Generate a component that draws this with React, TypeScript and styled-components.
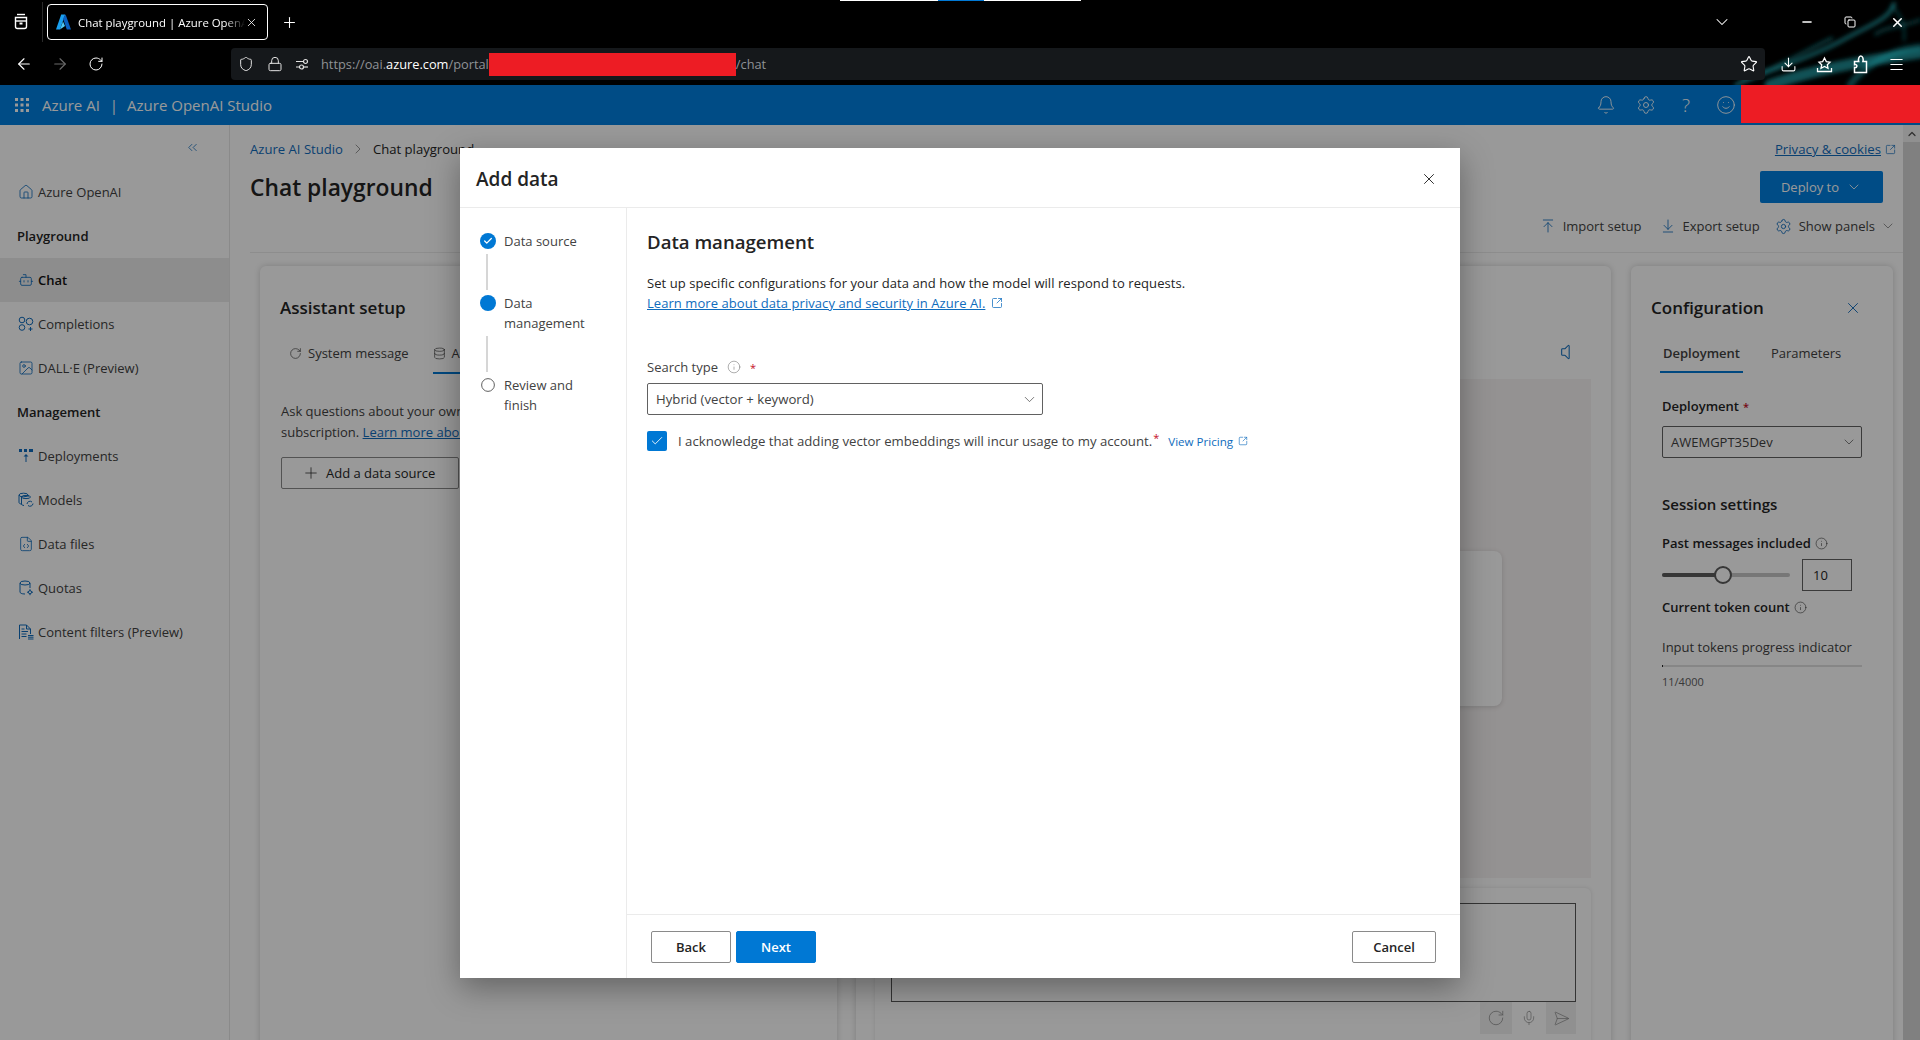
import React from 'react';
import styled, { createGlobalStyle } from 'styled-components';
import {
  ArrowDownToLine,
  ArrowLeft,
  ArrowRight,
  ArrowUpToLine,
  Bell,
  Bot,
  Check,
  ChevronDown,
  ChevronRight,
  ChevronsLeft,
  Copy,
  Database,
  Download,
  FileCode,
  House,
  Image,
  Info,
  Lock,
  Menu,
  Mic,
  Minus,
  Plus,
  RotateCw,
  SendHorizontal,
  Settings,
  Shield,
  Smile,
  SquareArrowOutUpRight,
  Star,
  Volume,
  X,
} from 'lucide-react';

const FONT = '"Open Sans", "Noto Sans", "Liberation Sans", sans-serif';
const BLUE = '#0078d4';
const LINK = '#0f6cbd';
const ICON_BLUE = '#0f6cbd';

const GlobalStyle = createGlobalStyle`
  html, body {
    margin: 0;
    padding: 0;
    height: 100%;
    overflow: hidden;
    background: #fff;
  }
  * {
    box-sizing: border-box;
  }
  body {
    font-family: ${FONT};
    font-size: 13px;
    color: #242424;
  }
`;

const Page = styled.div`
  position: relative;
  display: flex;
  flex-direction: column;
  width: 1920px;
  height: 1040px;
  overflow: hidden;
`;

/* browser chrome */
const Chrome = styled.div`
  position: relative;
  flex: 0 0 85px;
  background: #000;
  color: #fff;
`;

const ScreenShareBar = styled.div`
  position: absolute;
  top: 0;
  left: 840px;
  display: flex;
  width: 241px;
  height: 1px;
  background: #fff;
`;

const ScreenShareBlue = styled.div`
  width: 46px;
  margin-left: 98px;
  background: #0078d4;
`;

const Smoke = styled.svg`
  position: absolute;
  right: 0;
  top: 0;
`;

const TabRow = styled.div`
  position: relative;
  display: flex;
  align-items: center;
  height: 44px;
`;

const TabsButton = styled.div`
  display: flex;
  align-items: center;
  justify-content: center;
  width: 43px;
  height: 40px;
  border-right: 1px solid #2a2a2a;
`;

const Tab = styled.div`
  display: flex;
  align-items: center;
  width: 221px;
  height: 36px;
  margin-left: 4px;
  padding: 0 9px 0 8px;
  border: 1px solid #fff;
  border-radius: 4px;
  font-size: 11.4px;
`;

const TabTitle = styled.span`
  flex: 1;
  margin-left: 7px;
  overflow: hidden;
  white-space: nowrap;
  -webkit-mask-image: linear-gradient(90deg, #000 88%, transparent);
  mask-image: linear-gradient(90deg, #000 88%, transparent);
`;

const NewTab = styled.div`
  display: flex;
  margin-left: 13px;
`;

const WindowControls = styled.div`
  display: flex;
  align-items: center;
  margin-left: auto;
  padding-right: 15px;
`;

const WindowControl = styled.div<{ $gap: number }>`
  display: flex;
  margin-left: ${(p) => p.$gap}px;
`;

const UrlRow = styled.div`
  position: relative;
  display: flex;
  align-items: center;
  height: 32px;
  margin-top: 4px;
  padding: 0 6px;
`;

const NavButton = styled.div<{ $dim?: boolean }>`
  display: flex;
  align-items: center;
  justify-content: center;
  width: 36px;
  color: ${(p) => (p.$dim ? '#6b6b6b' : '#fff')};
`;

const AddressBar = styled.div`
  display: flex;
  flex: 1;
  align-items: center;
  height: 32px;
  margin: 0 5px 0 117px;
  padding: 0 7px 0 7px;
  border-radius: 4px;
  background: #15181b;
  font-size: 12.8px;
  color: #8f9296;
`;

const AddressIcon = styled.span<{ $gap: number }>`
  display: flex;
  margin-right: ${(p) => p.$gap}px;
  color: #e2e2e2;
`;

const UrlStrong = styled.span`
  color: #fff;
`;

const Redaction = styled.span`
  display: inline-block;
  width: 247px;
  height: 23px;
  background: #ed1c24;
`;

const AddressEnd = styled.span`
  display: flex;
  margin-left: auto;
  color: #fff;
`;

const ToolbarButton = styled.div`
  display: flex;
  align-items: center;
  justify-content: center;
  width: 36px;
`;

/* studio header */
const StudioBar = styled.div`
  display: flex;
  flex: 0 0 40px;
  align-items: center;
  padding-left: 14px;
  background: #007fe0;
  color: #fff;
`;

const Waffle = styled.svg`
  margin-right: 12px;
`;

const StudioTitle = styled.span`
  font-size: 15px;
  white-space: nowrap;
`;

const StudioDivider = styled.span`
  margin: 0 9px 0 10px;
  font-size: 15px;
`;

const StudioIcons = styled.div`
  display: flex;
  align-items: center;
  gap: 20px;
  margin-left: auto;
  padding-right: 184px;
`;

const HelpGlyph = styled.span`
  display: block;
  width: 20px;
  font-size: 19px;
  line-height: 20px;
  font-weight: 300;
  text-align: center;
`;

const RedBlock = styled.div`
  position: absolute;
  top: 85px;
  right: 0;
  z-index: 3;
  width: 179px;
  height: 38px;
  background: #ed1c24;
`;

/* page body */
const Body = styled.div`
  display: flex;
  flex: 1;
  min-height: 0;
`;

const Sidebar = styled.nav`
  flex: 0 0 230px;
  border-right: 1px solid #e6e6e6;
`;

const Collapse = styled.div`
  display: flex;
  justify-content: flex-end;
  height: 45px;
  padding: 15px 29px 0 0;
  color: ${ICON_BLUE};
`;

const NavSection = styled.div`
  display: flex;
  align-items: center;
  height: 44px;
  padding-left: 17px;
  font-weight: 600;
  font-size: 13px;
`;

const NavItem = styled.div<{ $active?: boolean }>`
  display: flex;
  align-items: center;
  height: 44px;
  padding-left: 18px;
  font-size: 13px;
  color: ${(p) => (p.$active ? '#111' : '#424242')};
  font-weight: ${(p) => (p.$active ? 600 : 400)};
  background: ${(p) => (p.$active ? '#ebebeb' : 'transparent')};
`;

const NavGlyph = styled.span`
  display: flex;
  align-items: center;
  justify-content: center;
  width: 16px;
  margin-right: 4px;
  color: ${ICON_BLUE};
`;

const Main = styled.main`
  flex: 1;
  min-width: 0;
`;

const Head = styled.header`
  display: flex;
  justify-content: space-between;
  height: 128px;
  margin-left: 20px;
  padding-top: 14px;
  border-bottom: 1px solid #ececec;
`;

const Crumbs = styled.div`
  display: flex;
  align-items: center;
  height: 20px;
  font-size: 13.1px;
`;

const CrumbLink = styled.span`
  color: ${LINK};
`;

const CrumbSep = styled.span`
  display: flex;
  margin: 0 7px;
  color: #616161;
`;

const PageTitle = styled.h1`
  margin: 14px 0 0;
  font-size: 22.8px;
  line-height: 30px;
  font-weight: 600;
`;

const HeadRight = styled.div`
  display: flex;
  flex-direction: column;
  align-items: flex-end;
  padding-right: 7px;
`;

const PrivacyLink = styled.a`
  display: flex;
  align-items: center;
  gap: 4px;
  height: 20px;
  font-size: 13.2px;
  color: ${LINK};
  text-decoration: underline;
`;

const DeployButton = styled.div`
  display: flex;
  align-items: center;
  justify-content: center;
  gap: 7px;
  width: 123px;
  height: 32px;
  margin: 12px 13px 0 0;
  border-radius: 2px;
  background: #007fe0;
  color: #fff;
  font-size: 13px;
`;

const HeadTools = styled.div`
  display: flex;
  align-items: center;
  height: 22px;
  margin-top: 12px;
  font-size: 13px;
  color: #424242;
`;

const HeadTool = styled.span<{ $gap: number }>`
  display: flex;
  align-items: center;
  gap: 7px;
  margin-left: ${(p) => p.$gap}px;
  color: #424242;
  svg {
    color: ${ICON_BLUE};
  }
`;

const ToolChevron = styled.span`
  display: flex;
  margin-left: 5px;
  color: #616161;
`;

const Cards = styled.div`
  display: flex;
  gap: 19px;
  height: 800px;
  margin: 13px 0 0 30px;
`;

const Card = styled.section<{ $width: number }>`
  flex: 0 0 ${(p) => p.$width}px;
  border-radius: 6px;
  background: #fff;
  box-shadow: 0 0 6px rgba(0, 0, 0, 0.18);
`;

const SetupCard = styled(Card)`
  padding: 29px 20px;
`;

const CardTitle = styled.h2`
  margin: 0;
  font-size: 17px;
  line-height: 26px;
  font-weight: 600;
`;

const SetupTabs = styled.div`
  display: flex;
  align-items: flex-start;
  height: 34px;
  margin-top: 19px;
  padding-left: 9px;
  font-size: 13px;
  color: #424242;
`;

const SetupTab = styled.span<{ $active?: boolean }>`
  display: flex;
  align-items: center;
  gap: 6px;
  height: 34px;
  margin-right: 24px;
  padding-bottom: 6px;
  border-bottom: ${(p) => (p.$active ? `2px solid ${BLUE}` : '2px solid transparent')};
`;

const SetupParagraph = styled.p`
  margin: 27px 0 0 1px;
  font-size: 13px;
  line-height: 21px;
  white-space: nowrap;
  color: #424242;
`;

const UnderLink = styled.span`
  color: ${LINK};
  text-decoration: underline;
`;

const OutlineButton = styled.div`
  display: flex;
  align-items: center;
  gap: 6px;
  width: 178px;
  height: 32px;
  margin: 14px 0 0 1px;
  padding-left: 20px;
  border: 1px solid #8a8a8a;
  border-radius: 2px;
  font-size: 13px;
`;

const ChatCard = styled(Card)`
  padding: 0 20px 0 19px;
`;

const SpeakerRow = styled.div`
  display: flex;
  align-items: center;
  justify-content: flex-end;
  height: 113px;
  padding: 58px 11px 0 0;
  color: ${ICON_BLUE};
`;

const ChatPane = styled.div`
  display: flex;
  align-items: center;
  justify-content: center;
  height: 499px;
  background: #f7f3f3;
`;

const ChatNotice = styled.div`
  width: 538px;
  height: 155px;
  border-radius: 8px;
  background: #fff;
  box-shadow: 0 1px 5px rgba(0, 0, 0, 0.15);
`;

const InputCard = styled.div`
  height: 160px;
  margin-top: 10px;
  padding: 15px 15px 0 16px;
  border-radius: 6px;
  box-shadow: 0 0 4px rgba(0, 0, 0, 0.12);
`;

const TextBox = styled.div`
  height: 99px;
  border: 1px solid #575757;
`;

const InputTools = styled.div`
  display: flex;
  justify-content: flex-end;
  gap: 2px;
  color: #8a8a8a;
`;

const InputTool = styled.span<{ $patch?: boolean; $width: number }>`
  display: flex;
  align-items: center;
  justify-content: center;
  width: ${(p) => p.$width}px;
  height: 32px;
  background: ${(p) => (p.$patch ? '#f0f0f0' : 'transparent')};
`;

const ConfigCard = styled(Card)`
  margin-left: 1px;
  padding: 29px 20px;
`;

const ConfigHead = styled.div`
  display: flex;
  align-items: center;
  justify-content: space-between;
  padding-right: 11px;
`;

const ConfigClose = styled.span`
  display: flex;
  color: ${ICON_BLUE};
`;

const ConfigTabs = styled.div`
  display: flex;
  gap: 25px;
  height: 32px;
  margin: 20px 0 0 9px;
  font-size: 13px;
  color: #424242;
`;

const ConfigTab = styled.span<{ $active?: boolean }>`
  height: 32px;
  padding: 0 3px;
  line-height: 24px;
  font-weight: ${(p) => (p.$active ? 600 : 400)};
  border-bottom: ${(p) => (p.$active ? `2px solid ${BLUE}` : '2px solid transparent')};
`;

const ConfigBody = styled.div`
  padding-left: 11px;
`;

const ConfigLabel = styled.div<{ $top: number }>`
  display: flex;
  align-items: center;
  gap: 4px;
  height: 20px;
  margin-top: ${(p) => p.$top}px;
  font-size: 13px;
  font-weight: 600;
  white-space: nowrap;
`;

const Required = styled.span`
  color: #c50f1f;
  font-size: 11px;
`;

const ConfigSelect = styled.div`
  display: flex;
  align-items: center;
  justify-content: space-between;
  width: 200px;
  height: 32px;
  margin-top: 10px;
  padding: 0 4px 0 8px;
  border: 1px solid #616161;
  border-radius: 2px;
  font-size: 13px;
  color: #424242;
`;

const SessionTitle = styled.div`
  height: 24px;
  margin-top: 34px;
  font-size: 15px;
  line-height: 24px;
  font-weight: 600;
`;

const SliderRow = styled.div`
  display: flex;
  align-items: center;
  margin-top: 6px;
`;

const SliderTrack = styled.div`
  position: relative;
  width: 128px;
  height: 4px;
  border-radius: 2px;
  background: #c7c7c7;
`;

const SliderFill = styled.div`
  height: 4px;
  border-radius: 2px;
  background: #5c5c5c;
`;

const SliderThumb = styled.div`
  position: absolute;
  top: -7px;
  width: 18px;
  height: 18px;
  border: 2px solid #5c5c5c;
  border-radius: 50%;
  background: #fff;
`;

const NumberBox = styled.div`
  width: 50px;
  height: 32px;
  margin-left: 12px;
  padding-left: 10px;
  border: 1px solid #616161;
  font-size: 13px;
  line-height: 30px;
`;

const ProgressLabel = styled.div`
  margin-top: 20px;
  font-size: 13px;
  line-height: 20px;
  color: #424242;
  white-space: nowrap;
`;

const ProgressTrack = styled.div`
  width: 200px;
  height: 2px;
  margin-top: 8px;
  background: #e0e0e0;
`;

const ProgressFill = styled.div`
  height: 2px;
  background: #242424;
`;

const TokenCount = styled.div`
  margin-top: 7px;
  font-size: 11px;
  line-height: 16px;
  color: #616161;
`;

const Scrollbar = styled.div`
  flex: 0 0 17px;
  background: #d6d6d6;
`;

const ScrollArrow = styled.div`
  display: flex;
  align-items: center;
  justify-content: center;
  height: 17px;
  background: #f1f1f1;
  color: #505050;
`;

/* dialog */
const Overlay = styled.div`
  position: absolute;
  top: 85px;
  left: 0;
  right: 0;
  bottom: 0;
  z-index: 2;
  display: flex;
  align-items: center;
  justify-content: center;
  background: rgba(0, 0, 0, 0.4);
`;

const Modal = styled.div`
  display: flex;
  flex-direction: column;
  width: 1000px;
  height: 830px;
  margin-top: 1px;
  background: #fff;
  box-shadow: 0 10px 30px rgba(0, 0, 0, 0.35);
`;

const ModalHead = styled.div`
  display: flex;
  flex: 0 0 60px;
  align-items: center;
  justify-content: space-between;
  padding: 3px 22px 0 16px;
  border-bottom: 1px solid #ebebeb;
`;

const ModalTitle = styled.h2`
  margin: 0;
  font-size: 19px;
  font-weight: 600;
`;

const ModalBody = styled.div`
  display: flex;
  flex: 1;
  min-height: 0;
`;

const StepRail = styled.div`
  flex: 0 0 167px;
  padding: 23px 0 0 20px;
  border-right: 1px solid #ebebeb;
`;

const Step = styled.div`
  display: flex;
  gap: 8px;
  font-size: 13px;
  line-height: 20px;
  color: #424242;
`;

const StepLabel = styled.div`
  width: 92px;
`;

const StepDot = styled.div<{ $state: 'done' | 'current' | 'todo' }>`
  display: flex;
  flex: 0 0 16px;
  align-items: center;
  justify-content: center;
  width: 16px;
  height: 16px;
  margin-top: 2px;
  border-radius: 50%;
  background: ${(p) => (p.$state === 'todo' ? '#fff' : BLUE)};
  border: ${(p) => (p.$state === 'todo' ? '1.5px solid #424242' : 'none')};
  transform: ${(p) => (p.$state === 'todo' ? 'scale(0.85)' : 'none')};
  color: #fff;
`;

const StepLine = styled.div`
  width: 2px;
  height: 36px;
  margin: 3px 0 3px 6px;
  background: #d6d6d6;
`;

const ModalMain = styled.div`
  display: flex;
  flex: 1;
  flex-direction: column;
  min-width: 0;
`;

const Pane = styled.div`
  flex: 1;
  padding: 20px 20px 0;
`;

const PaneTitle = styled.h3`
  margin: 0;
  font-size: 18.6px;
  line-height: 28px;
  font-weight: 600;
`;

const PaneText = styled.p`
  margin: 17px 0 0;
  font-size: 13px;
  line-height: 20px;
  letter-spacing: 0.06px;
`;

const PaneLink = styled.a`
  color: ${LINK};
  text-decoration: underline;
`;

const LinkIcon = styled.span`
  display: inline-flex;
  margin-left: 6px;
  vertical-align: -1px;
  color: ${LINK};
`;

const FieldLabel = styled.div`
  display: flex;
  align-items: center;
  height: 20px;
  margin-top: 44px;
  font-size: 13px;
  color: #424242;
`;

const FieldInfo = styled.span`
  display: flex;
  margin: 0 9px 0 9px;
  color: #757575;
`;

const FieldSelect = styled.div`
  display: flex;
  align-items: center;
  justify-content: space-between;
  width: 396px;
  height: 32px;
  margin-top: 6px;
  padding: 0 4px 0 8px;
  border: 1px solid #616161;
  border-radius: 2px;
  font-size: 13.2px;
  color: #424242;
`;

const CheckRow = styled.div`
  display: flex;
  align-items: center;
  margin-top: 16px;
  font-size: 13.2px;
  color: #424242;
`;

const CheckBox = styled.span`
  display: flex;
  align-items: center;
  justify-content: center;
  width: 20px;
  height: 20px;
  margin-right: 11px;
  border-radius: 2px;
  background: ${BLUE};
  color: #fff;
`;

const StarMark = styled.span`
  align-self: flex-start;
  margin-left: 1px;
  color: #c50f1f;
  font-size: 11px;
  line-height: 14px;
`;

const PricingLink = styled.a`
  display: flex;
  align-items: center;
  gap: 5px;
  margin-left: 9px;
  font-size: 11.6px;
  color: ${LINK};
`;

const ModalFooter = styled.div`
  display: flex;
  flex: 0 0 64px;
  align-items: center;
  padding: 0 24px;
  border-top: 1px solid #ebebeb;
`;

const DialogButton = styled.div<{ $primary?: boolean; $width: number; $gap?: number; $push?: boolean }>`
  display: flex;
  align-items: center;
  justify-content: center;
  width: ${(p) => p.$width}px;
  height: 32px;
  margin-left: ${(p) => (p.$push ? 'auto' : `${p.$gap || 0}px`)};
  border: 1px solid ${(p) => (p.$primary ? BLUE : '#8a8a8a')};
  border-radius: 2px;
  background: ${(p) => (p.$primary ? BLUE : '#fff')};
  color: ${(p) => (p.$primary ? '#fff' : '#242424')};
  font-size: 13px;
  font-weight: 600;
`;

interface NavEntry {
  label: string;
  icon?: React.ReactNode;
  section?: boolean;
  active?: boolean;
}

const thin = { size: 16, strokeWidth: 1.25 };

const CompletionsIcon = () => (
  <svg width="16" height="16" viewBox="0 0 16 16" fill="none" stroke="currentColor" strokeWidth="1">
    <circle cx="4" cy="4" r="2.8" />
    <circle cx="4" cy="11.5" r="2.8" />
    <circle cx="11.5" cy="5.5" r="3.3" />
    <path d="M12.5 11v4M10.5 13h4" />
  </svg>
);

const DeploymentsIcon = () => (
  <svg width="16" height="16" viewBox="0 0 16 16" fill="currentColor">
    <rect x="1" y="1" width="3" height="3" />
    <rect x="6" y="1" width="3" height="3" />
    <rect x="11" y="1" width="4" height="3" />
    <path d="M8 6l-2.5 2.5h2V14h1V8.5h2z" />
  </svg>
);

const ModelsIcon = () => (
  <svg width="16" height="16" viewBox="0 0 16 16" fill="none" stroke="currentColor" strokeWidth="1">
    <ellipse cx="5.5" cy="3" rx="4.5" ry="1.8" />
    <path d="M1 3v7.5c0 .8 1.2 1.5 3 1.7M10 3v2" />
    <ellipse cx="8" cy="5" rx="4.5" ry="1.6" />
    <path d="M3.5 5v7c0 .8 1 1.3 2.5 1.5" />
    <path d="M9 12a3 3 0 0 1 5-2M15 11.5a3 3 0 0 1-5 2" />
  </svg>
);

const QuotasIcon = () => (
  <svg width="16" height="16" viewBox="0 0 16 16" fill="none" stroke="currentColor" strokeWidth="1">
    <ellipse cx="7" cy="3" rx="5" ry="2" />
    <path d="M2 3v9c0 1 1.5 2 5 2M12 3v5" />
    <circle cx="12" cy="12.2" r="1.6" />
    <path d="M12 9.2v1.4M12 13.8v1.4M9 12.2h1.4M13.6 12.2H15" />
  </svg>
);

const FiltersIcon = () => (
  <svg width="16" height="16" viewBox="0 0 16 16" fill="none" stroke="currentColor" strokeWidth="1">
    <path d="M1.5 15V1h7l4 4v5" />
    <path d="M8.5 1v4h4M3.5 5h3M3.5 7.5h6.5M3.5 10h5M3.5 12.5h5" />
    <path d="M10 11.5h5.5M10 13.2h5.5M10 15h5.5" />
  </svg>
);

const AzureLogo = () => (
  <svg width="15" height="16" viewBox="0 0 15 16">
    <path d="M5.2 0.5h4L4 15.5H0z" fill="#1aa0ef" />
    <path d="M9.6 0.5l5.4 15h-4.2L7 4.5z" fill="#0a5fc0" />
    <path d="M4 15.5l5-3.6-2-4.4z" fill="#50c8f5" />
  </svg>
);

const TabsListIcon = () => (
  <svg width="16" height="18" viewBox="0 0 16 18" fill="none" stroke="currentColor" strokeWidth="1.4">
    <path d="M4 1.5h8" />
    <path d="M2.5 4.5h11v9a2 2 0 0 1-2 2h-7a2 2 0 0 1-2-2z" />
    <path d="M2.5 8h11" />
    <path d="M6.5 10.5h3" strokeWidth="2" />
  </svg>
);

const ExtensionIcon = () => (
  <svg width="18" height="20" viewBox="0 0 18 20" fill="none" stroke="currentColor" strokeWidth="1.5">
    <path d="M3.5 18.5v-5c1.6.4 2.4-.5 2.4-1.4s-.8-1.8-2.4-1.4V7.5h4.2C7 5.5 7.8 2 9.8 2s2.9 3.5 2.1 5.5h3.6v11z" />
  </svg>
);

const NAV: NavEntry[] = [
  { label: 'Azure OpenAI', icon: <House {...thin} /> },
  { label: 'Playground', section: true },
  { label: 'Chat', icon: <Bot {...thin} />, active: true },
  { label: 'Completions', icon: <CompletionsIcon /> },
  { label: 'DALL·E (Preview)', icon: <Image {...thin} /> },
  { label: 'Management', section: true },
  { label: 'Deployments', icon: <DeploymentsIcon /> },
  { label: 'Models', icon: <ModelsIcon /> },
  { label: 'Data files', icon: <FileCode {...thin} /> },
  { label: 'Quotas', icon: <QuotasIcon /> },
  { label: 'Content filters (Preview)', icon: <FiltersIcon /> },
];

const App: React.FC = () => {
  return (
    <Page>
      <GlobalStyle />
      <Chrome>
        <Smoke width="240" height="85" viewBox="0 0 240 85" fill="none">
          <defs>
            <filter id="smokeBlur">
              <feGaussianBlur stdDeviation="2" />
            </filter>
          </defs>
          <g filter="url(#smokeBlur)" stroke="#1d959d" strokeLinecap="round">
            <path d="M56 85c30-14 72-26 105-44s48-22 53-37" strokeWidth="4" opacity="0.55" />
            <path d="M90 85c40-14 90-24 150-32" strokeWidth="11" opacity="0.55" />
            <path d="M62 78c28-6 60-26 90-40" strokeWidth="2" opacity="0.6" />
            <path d="M170 85c10-14 34-34 70-38" strokeWidth="7" opacity="0.4" />
            <path d="M196 34c10-8 24-6 44-14" strokeWidth="4" opacity="0.3" />
            <path d="M212 6c8 8 14 18 12 34" strokeWidth="3" opacity="0.3" />
          </g>
        </Smoke>
        <ScreenShareBar>
          <ScreenShareBlue />
        </ScreenShareBar>
        <TabRow>
          <TabsButton>
            <TabsListIcon />
          </TabsButton>
          <Tab>
            <AzureLogo />
            <TabTitle>Chat playground | Azure OpenAI Studio</TabTitle>
            <X size={13} strokeWidth={1.5} />
          </Tab>
          <NewTab>
            <Plus size={17} strokeWidth={1.5} />
          </NewTab>
          <WindowControls>
            <ChevronDown size={20} strokeWidth={1.25} />
            <WindowControl $gap={68}>
              <Minus size={14} strokeWidth={2.5} />
            </WindowControl>
            <WindowControl $gap={30}>
              <Copy size={12} strokeWidth={2} />
            </WindowControl>
            <WindowControl $gap={34}>
              <X size={15} strokeWidth={2.5} />
            </WindowControl>
          </WindowControls>
        </TabRow>
        <UrlRow>
          <NavButton>
            <ArrowLeft size={18} strokeWidth={1.5} />
          </NavButton>
          <NavButton $dim>
            <ArrowRight size={18} strokeWidth={1.5} />
          </NavButton>
          <NavButton>
            <RotateCw size={16} strokeWidth={1.5} />
          </NavButton>
          <AddressBar>
            <AddressIcon $gap={13}>
              <Shield size={16} strokeWidth={1.5} />
            </AddressIcon>
            <AddressIcon $gap={12}>
              <Lock size={16} strokeWidth={1.5} />
            </AddressIcon>
            <AddressIcon $gap={12}>
              <svg width="14" height="14" viewBox="0 0 14 14" fill="none" stroke="currentColor" strokeWidth="1.2">
                <path d="M1 4.5h7M1 10h3" />
                <circle cx="10.5" cy="4.5" r="2" />
                <circle cx="6.5" cy="10" r="2" />
                <path d="M9 10h4" />
              </svg>
            </AddressIcon>
            https://oai.<UrlStrong>azure.com</UrlStrong>/portal
            <Redaction />
            /chat
            <AddressEnd>
              <Star size={18} strokeWidth={1.5} />
            </AddressEnd>
          </AddressBar>
          <ToolbarButton>
            <Download size={17} strokeWidth={1.5} />
          </ToolbarButton>
          <ToolbarButton>
            <svg width="17" height="17" viewBox="0 0 17 17" fill="none" stroke="currentColor" strokeWidth="1.3">
              <path d="M8.5 2l1.8 3.6 3.7.5-2.7 2.6.7 3.6-3.5-1.8L5 12.3l.7-3.6L3 6.1l3.7-.5z" />
              <path d="M1.5 12v3.5h14V12" />
            </svg>
          </ToolbarButton>
          <ToolbarButton>
            <ExtensionIcon />
          </ToolbarButton>
          <ToolbarButton>
            <Menu size={17} strokeWidth={1.5} />
          </ToolbarButton>
        </UrlRow>
      </Chrome>

      <StudioBar>
        <Waffle width="16" height="16" viewBox="0 0 16 16" fill="currentColor">
          <rect x="1" y="1" width="3" height="3" />
          <rect x="6.5" y="1" width="3" height="3" />
          <rect x="12" y="1" width="3" height="3" />
          <rect x="1" y="6.5" width="3" height="3" />
          <rect x="6.5" y="6.5" width="3" height="3" />
          <rect x="12" y="6.5" width="3" height="3" />
          <rect x="1" y="12" width="3" height="3" />
          <rect x="6.5" y="12" width="3" height="3" />
          <rect x="12" y="12" width="3" height="3" />
        </Waffle>
        <StudioTitle>Azure AI</StudioTitle>
        <StudioDivider>|</StudioDivider>
        <StudioTitle>Azure OpenAI Studio</StudioTitle>
        <StudioIcons>
          <Bell size={20} strokeWidth={1.1} />
          <Settings size={20} strokeWidth={1.1} />
          <HelpGlyph>?</HelpGlyph>
          <Smile size={20} strokeWidth={1.1} />
        </StudioIcons>
      </StudioBar>
      <RedBlock />

      <Body>
        <Sidebar>
          <Collapse>
            <ChevronsLeft size={15} strokeWidth={1.25} />
          </Collapse>
          {NAV.map((entry) =>
            entry.section ? (
              <NavSection key={entry.label}>{entry.label}</NavSection>
            ) : (
              <NavItem key={entry.label} $active={entry.active}>
                <NavGlyph>{entry.icon}</NavGlyph>
                {entry.label}
              </NavItem>
            ),
          )}
        </Sidebar>

        <Main>
          <Head>
            <div>
              <Crumbs>
                <CrumbLink>Azure AI Studio</CrumbLink>
                <CrumbSep>
                  <ChevronRight size={16} strokeWidth={1} />
                </CrumbSep>
                Chat playground
              </Crumbs>
              <PageTitle>Chat playground</PageTitle>
            </div>
            <HeadRight>
              <PrivacyLink>
                Privacy &amp; cookies
                <SquareArrowOutUpRight size={11} strokeWidth={1.5} />
              </PrivacyLink>
              <DeployButton>
                Deploy to
                <ChevronDown size={16} strokeWidth={1.25} />
              </DeployButton>
              <HeadTools>
                <HeadTool $gap={0}>
                  <ArrowUpToLine {...thin} />
                  Import setup
                </HeadTool>
                <HeadTool $gap={18}>
                  <ArrowDownToLine {...thin} />
                  Export setup
                </HeadTool>
                <HeadTool $gap={15}>
                  <Settings size={17} strokeWidth={1.25} />
                  Show panels
                </HeadTool>
                <ToolChevron>
                  <ChevronDown size={16} strokeWidth={1} />
                </ToolChevron>
              </HeadTools>
            </HeadRight>
          </Head>

          <Cards>
            <SetupCard $width={577}>
              <CardTitle>Assistant setup</CardTitle>
              <SetupTabs>
                <SetupTab>
                  <RotateCw size={13} strokeWidth={1.25} />
                  System message
                </SetupTab>
                <SetupTab $active>
                  <Database size={13} strokeWidth={1.25} />
                  Add
                </SetupTab>
              </SetupTabs>
              <SetupParagraph>
                Ask questions about your own
                <br />
                subscription. <UnderLink>Learn more about</UnderLink>
              </SetupParagraph>
              <OutlineButton>
                <Plus size={18} strokeWidth={1} />
                Add a data source
              </OutlineButton>
            </SetupCard>

            <ChatCard $width={755}>
              <SpeakerRow>
                <Volume size={20} strokeWidth={1.25} />
              </SpeakerRow>
              <ChatPane>
                <ChatNotice />
              </ChatPane>
              <InputCard>
                <TextBox />
                <InputTools>
                  <InputTool $patch $width={32}>
                    <RotateCw size={18} strokeWidth={1} />
                  </InputTool>
                  <InputTool $width={30}>
                    <Mic size={16} strokeWidth={1} />
                  </InputTool>
                  <InputTool $patch $width={30}>
                    <SendHorizontal size={17} strokeWidth={1} />
                  </InputTool>
                </InputTools>
              </InputCard>
            </ChatCard>

            <ConfigCard $width={262}>
              <ConfigHead>
                <CardTitle>Configuration</CardTitle>
                <ConfigClose>
                  <X size={18} strokeWidth={1.25} />
                </ConfigClose>
              </ConfigHead>
              <ConfigTabs>
                <ConfigTab $active>Deployment</ConfigTab>
                <ConfigTab>Parameters</ConfigTab>
              </ConfigTabs>
              <ConfigBody>
                <ConfigLabel $top={23}>
                  Deployment <Required>*</Required>
                </ConfigLabel>
                <ConfigSelect>
                  AWEMGPT35Dev
                  <ChevronDown size={16} strokeWidth={1} />
                </ConfigSelect>
                <SessionTitle>Session settings</SessionTitle>
                <ConfigLabel $top={17}>
                  Past messages included
                  <Info size={13} strokeWidth={1} />
                </ConfigLabel>
                <SliderRow>
                  <SliderTrack>
                    <SliderFill style={{ width: `${(61 / 128) * 100}%` }} />
                    <SliderThumb style={{ left: '52px' }} />
                  </SliderTrack>
                  <NumberBox>10</NumberBox>
                </SliderRow>
                <ConfigLabel $top={6}>
                  Current token count
                  <Info size={13} strokeWidth={1} />
                </ConfigLabel>
                <ProgressLabel>Input tokens progress indicator</ProgressLabel>
                <ProgressTrack>
                  <ProgressFill style={{ width: `${(11 / 4000) * 100}%` }} />
                </ProgressTrack>
                <TokenCount>11/4000</TokenCount>
              </ConfigBody>
            </ConfigCard>
          </Cards>
        </Main>

        <Scrollbar>
          <ScrollArrow>
            <ChevronDown size={12} strokeWidth={2.5} style={{ transform: 'rotate(180deg)' }} />
          </ScrollArrow>
        </Scrollbar>
      </Body>

      <Overlay>
        <Modal>
          <ModalHead>
            <ModalTitle>Add data</ModalTitle>
            <X size={18} strokeWidth={1.25} />
          </ModalHead>
          <ModalBody>
            <StepRail>
              <Step>
                <StepDot $state="done">
                  <Check size={10} strokeWidth={3} />
                </StepDot>
                <StepLabel>Data source</StepLabel>
              </Step>
              <StepLine />
              <Step>
                <StepDot $state="current" />
                <StepLabel>Data management</StepLabel>
              </Step>
              <StepLine />
              <Step>
                <StepDot $state="todo" />
                <StepLabel>Review and finish</StepLabel>
              </Step>
            </StepRail>
            <ModalMain>
              <Pane>
                <PaneTitle>Data management</PaneTitle>
                <PaneText>
                  Set up specific configurations for your data and how the model will respond to requests.
                  <br />
                  <PaneLink>Learn more about data privacy and security in Azure AI.</PaneLink>
                  <LinkIcon>
                    <SquareArrowOutUpRight size={12} strokeWidth={1.5} />
                  </LinkIcon>
                </PaneText>
                <FieldLabel>
                  Search type
                  <FieldInfo>
                    <Info size={14} strokeWidth={1} />
                  </FieldInfo>
                  <Required>*</Required>
                </FieldLabel>
                <FieldSelect>
                  Hybrid (vector + keyword)
                  <ChevronDown size={17} strokeWidth={1} />
                </FieldSelect>
                <CheckRow>
                  <CheckBox>
                    <Check size={14} strokeWidth={1.5} />
                  </CheckBox>
                  I acknowledge that adding vector embeddings will incur usage to my account.
                  <StarMark>*</StarMark>
                  <PricingLink>
                    View Pricing
                    <SquareArrowOutUpRight size={10} strokeWidth={1.5} />
                  </PricingLink>
                </CheckRow>
              </Pane>
              <ModalFooter>
                <DialogButton $width={80}>Back</DialogButton>
                <DialogButton $primary $width={80} $gap={5}>
                  Next
                </DialogButton>
                <DialogButton $width={84} $push>
                  Cancel
                </DialogButton>
              </ModalFooter>
            </ModalMain>
          </ModalBody>
        </Modal>
      </Overlay>
    </Page>
  );
};

export default App;
